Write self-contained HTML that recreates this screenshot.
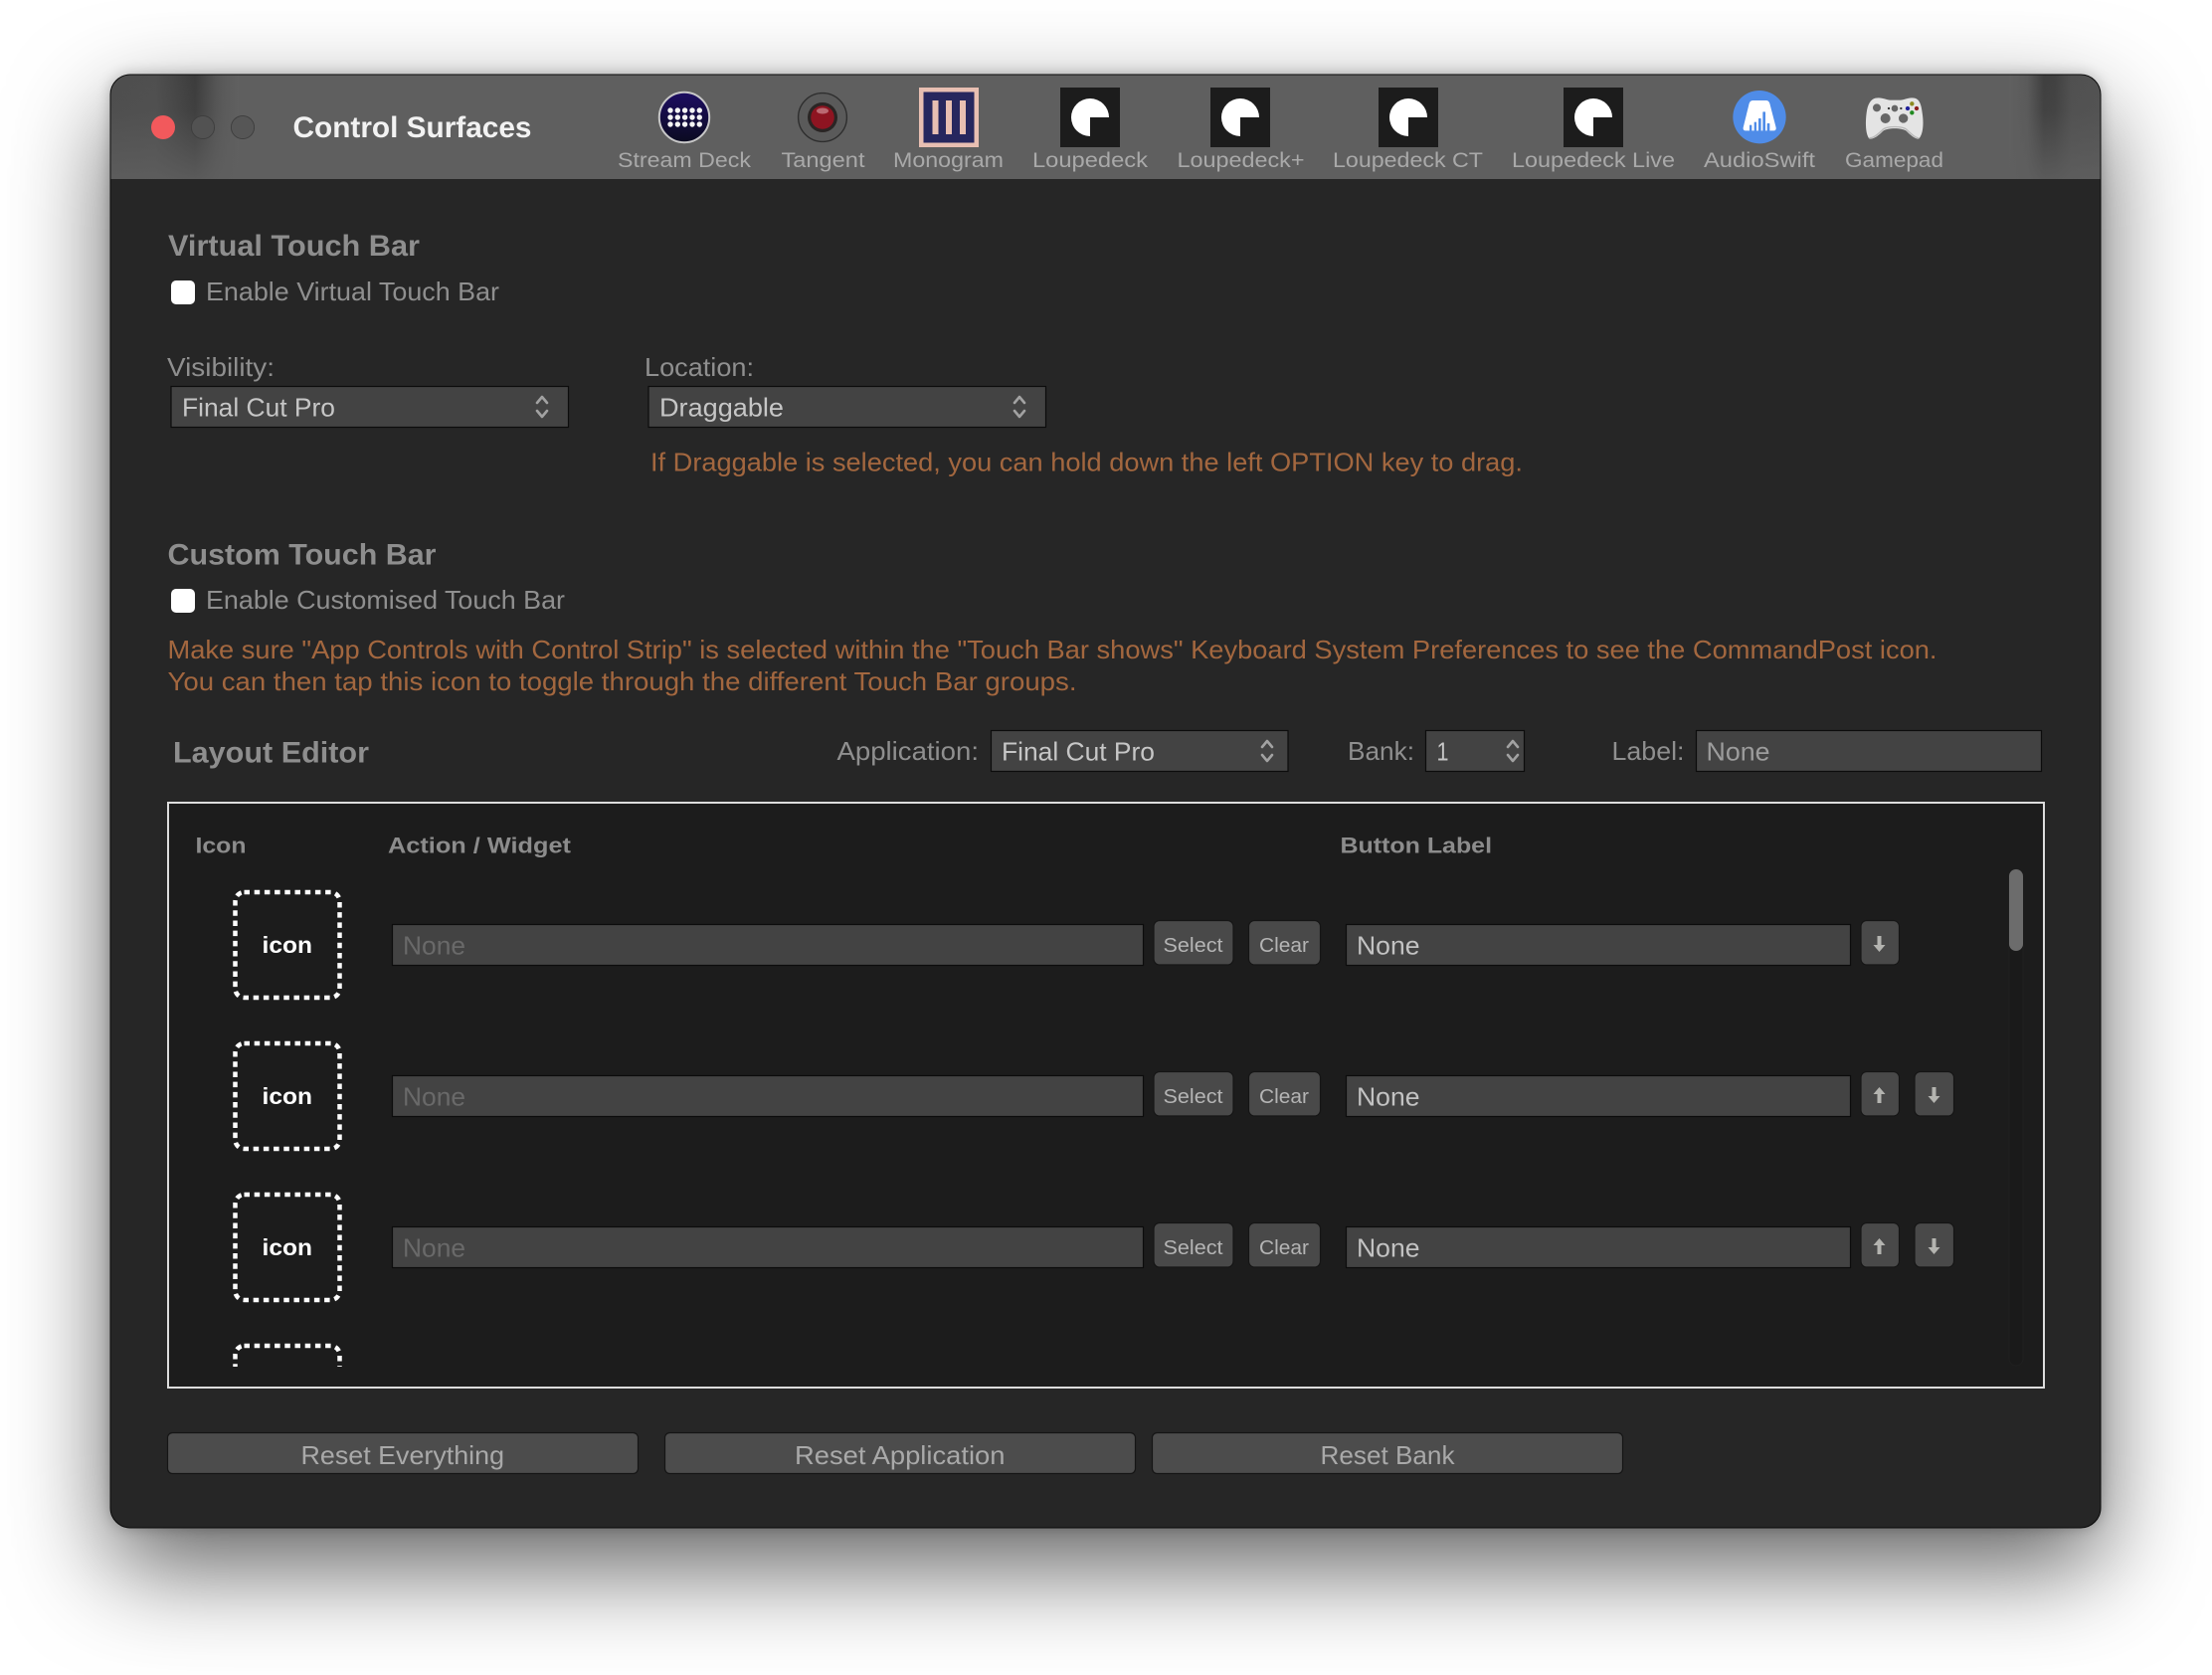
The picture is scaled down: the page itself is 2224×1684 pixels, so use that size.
<!DOCTYPE html>
<html><head><meta charset="utf-8"><title>Control Surfaces</title>
<style>
html,body{margin:0;padding:0;background:#fff;width:2224px;height:1684px;overflow:hidden}
#win{position:absolute;left:111px;top:75px;width:2001px;height:1461px;border-radius:20px;box-shadow:0 40px 100px 0 rgba(0,0,0,.62),0 0 14px rgba(0,0,0,.25)}
svg{position:absolute;left:0;top:0}
text{font-family:"Liberation Sans",sans-serif;font-size:26px}
.tb{font-size:21px;fill:#a9a9a9}
.h{font-size:29.5px;font-weight:bold;fill:#8e8e8e}
.l{fill:#8f8f8f}
.v{fill:#c6c6c6}
.o{fill:#a3673f}
.th{font-size:22.5px;font-weight:bold;fill:#8c8c8c}
.ic{font-size:23px;font-weight:bold;fill:#fff}
.ph{fill:#696969}
.b{font-size:20px;fill:#b4b4b4}
.r{fill:#a9a9a9}
.f{fill:#434343;stroke:#0c0c0c;stroke-width:1.2}
.btn{fill:#494949;stroke:#151515;stroke-width:1.2}
.dot{fill:none;stroke:#fff;stroke-width:4.5;stroke-dasharray:5.5 4.7}
.chev{fill:none;stroke:#a2a2a2;stroke-width:2.6;stroke-linecap:round;stroke-linejoin:round}
</style></head><body>
<div id="win"></div>
<svg width="2224" height="1684" viewBox="0 0 2224 1684" xmlns="http://www.w3.org/2000/svg">
<defs>
<clipPath id="wc"><rect x="111" y="75" width="2001" height="1461" rx="20"/></clipPath>
<clipPath id="tc"><rect x="170" y="808" width="1884" height="566"/></clipPath>
<linearGradient id="bl" x1="111" x2="240" y1="0" y2="0" gradientUnits="userSpaceOnUse">
<stop offset="0" stop-color="#4d4d4d"/><stop offset=".35" stop-color="#4f4f4f"/><stop offset=".55" stop-color="#434343"/><stop offset=".66" stop-color="#3c3c3c"/><stop offset=".82" stop-color="#545454"/><stop offset=".88" stop-color="#5a5a5a"/><stop offset="1" stop-color="#606060"/>
</linearGradient>
<linearGradient id="br" x1="2020" x2="2112" y1="0" y2="0" gradientUnits="userSpaceOnUse">
<stop offset="0" stop-color="#606060"/><stop offset=".2" stop-color="#5a5a5a"/><stop offset=".38" stop-color="#3f3f3f"/><stop offset=".5" stop-color="#414141"/><stop offset=".68" stop-color="#505050"/><stop offset="1" stop-color="#525252"/>
</linearGradient>
<linearGradient id="fade" x1="0" x2="0" y1="75" y2="180" gradientUnits="userSpaceOnUse">
<stop offset="0" stop-color="#5f5f5f" stop-opacity="0"/><stop offset=".35" stop-color="#5f5f5f" stop-opacity=".1"/><stop offset="1" stop-color="#5f5f5f" stop-opacity=".85"/>
</linearGradient>
<linearGradient id="sd" x1="0" x2="0" y1="0" y2="1"><stop offset="0" stop-color="#1d0d62"/><stop offset="1" stop-color="#0b0b20"/></linearGradient>
</defs>
<g clip-path="url(#wc)">
<rect x="111" y="75" width="2001" height="1461" fill="#262626"/>
<rect x="111" y="75" width="2001" height="105" fill="#5f5f5f"/>
<rect x="111" y="75" width="129" height="105" fill="url(#bl)"/>
<rect x="2020" y="75" width="92" height="105" fill="url(#br)"/>
<rect x="111" y="75" width="129" height="105" fill="url(#fade)"/>
<rect x="2020" y="75" width="92" height="105" fill="url(#fade)"/>
</g>
<rect x="111" y="75" width="2001" height="1461" rx="20" fill="none" stroke="#0a0a0a" stroke-width="1"/>

<!-- traffic lights -->
<circle cx="164" cy="128" r="12" fill="#f2595c"/>
<circle cx="204" cy="128" r="11.6" fill="#525252" stroke="#3d3d3d" stroke-width=".9"/>
<circle cx="244" cy="128" r="11.6" fill="#565656" stroke="#3d3d3d" stroke-width=".9"/>
<text x="294.5" y="138" textLength="240" lengthAdjust="spacingAndGlyphs" style="font-size:30px;font-weight:bold;fill:#f2f2f2">Control Surfaces</text>

<!-- toolbar icons -->
<circle cx="688" cy="118" r="25.2" fill="url(#sd)" stroke="#c8c8c8" stroke-width="2"/>
<g fill="#f4f4f4">
<circle cx="674" cy="111" r="2.7"/><circle cx="681.3" cy="111" r="2.7"/><circle cx="688.6" cy="111" r="2.7"/><circle cx="696" cy="111" r="2.7"/><circle cx="703.3" cy="111" r="2.7"/>
<circle cx="674" cy="118" r="2.7"/><circle cx="681.3" cy="118" r="2.7"/><circle cx="688.6" cy="118" r="2.7"/><circle cx="696" cy="118" r="2.7"/><circle cx="703.3" cy="118" r="2.7"/>
<circle cx="674" cy="125" r="2.7"/><circle cx="681.3" cy="125" r="2.7"/><circle cx="688.6" cy="125" r="2.7"/><circle cx="696" cy="125" r="2.7"/><circle cx="703.3" cy="125" r="2.7"/>
</g>
<circle cx="827" cy="118" r="24.4" fill="#5a5a5a" stroke="#2e2e2e" stroke-width="1.4"/>
<circle cx="827" cy="118" r="15" fill="#2a2524"/>
<circle cx="827" cy="118" r="11.8" fill="#8e1421"/>
<ellipse cx="827" cy="111.5" rx="6" ry="3" fill="#d9a2a8" opacity=".6"/>

<rect x="924" y="88" width="60" height="60" fill="#e8bfb2"/>
<rect x="928.5" y="92.5" width="51" height="51" fill="#27275e"/>
<rect x="937.5" y="101" width="6" height="34" fill="#e8bfb2"/><rect x="951" y="101" width="6" height="34" fill="#e8bfb2"/><rect x="965" y="101" width="6" height="34" fill="#e8bfb2"/>

<rect x="1066" y="88" width="60" height="60" fill="#1c1c1c"/>
<path d="M1096 118H1115A19 19 0 1 0 1096 137Z" fill="#fff"/>
<rect x="1217" y="88" width="60" height="60" fill="#1c1c1c"/>
<path d="M1247 118H1266A19 19 0 1 0 1247 137Z" fill="#fff"/>
<rect x="1386" y="88" width="60" height="60" fill="#1c1c1c"/>
<path d="M1416 118H1435A19 19 0 1 0 1416 137Z" fill="#fff"/>
<rect x="1572" y="88" width="60" height="60" fill="#1c1c1c"/>
<path d="M1602 118H1621A19 19 0 1 0 1602 137Z" fill="#fff"/>

<g transform="translate(1720 80) scale(.33333)">
<circle cx="147" cy="113" r="80" fill="#4f8ce8"/>
<path d="M127 63H167Q175 63 178 72L197 145Q198 154 190 154H105Q97 154 98 145L116 72Q119 63 127 63Z" fill="#fff"/>
<g fill="#4f8ce8">
<rect x="117" y="137" width="7" height="18" rx="2"/><rect x="131" y="128" width="7" height="27" rx="2"/><rect x="144" y="117" width="8" height="38" rx="2"/><rect x="157" y="97" width="8" height="58" rx="2"/><rect x="170" y="132" width="8" height="23" rx="2"/>
</g>
</g>

<g transform="translate(1720 80) scale(.33333)">
<path d="M497 56C515 52 530 62 545 62H568C585 62 598 52 615 56C630 60 635 75 638 100C643 130 641 165 628 178C620 182 605 170 590 155C575 145 535 145 520 155C505 170 490 182 478 178C467 165 466 130 470 100C473 75 482 60 497 56Z" fill="#e4e4e4"/>
<path d="M478 176C490 178 505 165 520 150C535 140 575 140 590 150C605 165 620 178 628 176" fill="none" stroke="#b8b8b8" stroke-width="4"/>
<circle cx="501" cy="85" r="12" fill="#666"/><circle cx="555" cy="87" r="10" fill="#666"/><circle cx="537" cy="87" r="3.5" fill="#333"/><circle cx="574" cy="87" r="3.5" fill="#333"/>
<circle cx="527" cy="117" r="15" fill="#666"/><circle cx="581" cy="117" r="14" fill="#666"/>
<circle cx="607" cy="73" r="6.5" fill="#8c8a20"/><circle cx="621" cy="87" r="6.5" fill="#8e2020"/><circle cx="594" cy="87" r="6.5" fill="#20209a"/><circle cx="607" cy="100" r="6.5" fill="#208a20"/>
</g>

<text class="tb" x="621" y="168" textLength="134" lengthAdjust="spacingAndGlyphs">Stream Deck</text>
<text class="tb" x="785.5" y="168" textLength="84" lengthAdjust="spacingAndGlyphs">Tangent</text>
<text class="tb" x="898" y="168" textLength="111" lengthAdjust="spacingAndGlyphs">Monogram</text>
<text class="tb" x="1038" y="168" textLength="116" lengthAdjust="spacingAndGlyphs">Loupedeck</text>
<text class="tb" x="1183.5" y="168" textLength="128" lengthAdjust="spacingAndGlyphs">Loupedeck+</text>
<text class="tb" x="1340" y="168" textLength="151" lengthAdjust="spacingAndGlyphs">Loupedeck CT</text>
<text class="tb" x="1520" y="168" textLength="164" lengthAdjust="spacingAndGlyphs">Loupedeck Live</text>
<text class="tb" x="1713" y="168" textLength="112" lengthAdjust="spacingAndGlyphs">AudioSwift</text>
<text class="tb" x="1855" y="168" textLength="99" lengthAdjust="spacingAndGlyphs">Gamepad</text>

<!-- Virtual Touch Bar -->
<text class="h" x="169" y="257" textLength="253" lengthAdjust="spacingAndGlyphs">Virtual Touch Bar</text>
<rect x="172" y="282" width="24" height="24" rx="5" fill="#fff"/>
<text class="l" x="207" y="302" textLength="295" lengthAdjust="spacingAndGlyphs">Enable Virtual Touch Bar</text>
<text class="l" x="168" y="378" textLength="108" lengthAdjust="spacingAndGlyphs">Visibility:</text>
<text class="l" x="648" y="378" textLength="110" lengthAdjust="spacingAndGlyphs">Location:</text>
<rect class="f" x="172" y="388.5" width="399.5" height="41"/>
<text class="v" x="183" y="418.5" textLength="154" lengthAdjust="spacingAndGlyphs">Final Cut Pro</text>
<path class="chev" d="M540 405L545 399L550 405M540 413L545 419L550 413"/>
<rect class="f" x="652" y="388.5" width="399.5" height="41"/>
<text class="v" x="663" y="418.5" textLength="125" lengthAdjust="spacingAndGlyphs">Draggable</text>
<path class="chev" d="M1020 405L1025 399L1030 405M1020 413L1025 419L1030 413"/>
<text class="o" x="654" y="473.5" textLength="877" lengthAdjust="spacingAndGlyphs">If Draggable is selected, you can hold down the left OPTION key to drag.</text>

<!-- Custom Touch Bar -->
<text class="h" x="168.5" y="567.5" textLength="270" lengthAdjust="spacingAndGlyphs">Custom Touch Bar</text>
<rect x="172" y="592" width="24" height="24" rx="5" fill="#fff"/>
<text class="l" x="207" y="612" textLength="361" lengthAdjust="spacingAndGlyphs">Enable Customised Touch Bar</text>
<text class="o" x="168.5" y="662" textLength="1779" lengthAdjust="spacingAndGlyphs">Make sure "App Controls with Control Strip" is selected within the "Touch Bar shows" Keyboard System Preferences to see the CommandPost icon.</text>
<text class="o" x="168.5" y="694" textLength="914" lengthAdjust="spacingAndGlyphs">You can then tap this icon to toggle through the different Touch Bar groups.</text>

<!-- Layout Editor header -->
<text class="h" x="174" y="766.5" textLength="197" lengthAdjust="spacingAndGlyphs">Layout Editor</text>
<text class="l" x="841.5" y="764" textLength="142.5" lengthAdjust="spacingAndGlyphs">Application:</text>
<rect class="f" x="996.5" y="734.5" width="298.5" height="41"/>
<text class="v" x="1007" y="764.5" textLength="154" lengthAdjust="spacingAndGlyphs">Final Cut Pro</text>
<path class="chev" d="M1269 751L1274 745L1279 751M1269 759L1274 765L1279 759"/>
<text class="l" x="1355" y="764" textLength="67" lengthAdjust="spacingAndGlyphs">Bank:</text>
<rect class="f" x="1433.5" y="734.5" width="99" height="41"/>
<text class="v" x="1444.5" y="764.5" textLength="12" lengthAdjust="spacingAndGlyphs">1</text>
<path class="chev" d="M1516 751L1521 745L1526 751M1516 759L1521 765L1526 759"/>
<text class="l" x="1620.5" y="764" textLength="73" lengthAdjust="spacingAndGlyphs">Label:</text>
<rect class="f" x="1705.5" y="734.5" width="347" height="41"/>
<text x="1715.5" y="764.5" textLength="64" lengthAdjust="spacingAndGlyphs" fill="#9c9c9c">None</text>

<!-- Table -->
<rect x="169" y="807" width="1886" height="588" fill="#1c1c1c" stroke="#dcdcdc" stroke-width="2"/>
<text class="th" x="196.5" y="857.5" textLength="51" lengthAdjust="spacingAndGlyphs">Icon</text>
<text class="th" x="390" y="857.5" textLength="184" lengthAdjust="spacingAndGlyphs">Action / Widget</text>
<text class="th" x="1347.5" y="857.5" textLength="152.5" lengthAdjust="spacingAndGlyphs">Button Label</text>

<rect x="2020" y="874" width="14" height="499" rx="7" fill="#1a1a1a" stroke="#202020"/>
<rect x="2020" y="874" width="14" height="82" rx="7" fill="#6c6c6c"/>

<!-- Row 1 -->
<rect class="dot" x="236.5" y="897" width="105" height="106" rx="9"/>
<text class="ic" x="263.5" y="958" textLength="50.5" lengthAdjust="spacingAndGlyphs">icon</text>
<rect class="f" x="394.5" y="929.5" width="755" height="41"/>
<text class="ph" x="405" y="959.5" textLength="63" lengthAdjust="spacingAndGlyphs">None</text>
<rect class="btn" x="1160" y="925.5" width="80" height="44.5" rx="6"/>
<text class="b" x="1169.5" y="957" textLength="60" lengthAdjust="spacingAndGlyphs">Select</text>
<rect class="btn" x="1255.5" y="925.5" width="72" height="44.5" rx="6"/>
<text class="b" x="1266" y="957" textLength="50" lengthAdjust="spacingAndGlyphs">Clear</text>
<rect class="f" x="1353.5" y="929.5" width="507" height="41"/>
<text x="1364" y="959.5" textLength="63.5" lengthAdjust="spacingAndGlyphs" fill="#c2c2c2">None</text>
<rect class="btn" x="1871" y="925.5" width="38.5" height="44.5" rx="6"/>
<path d="M1887.5 941H1891.5V950H1895.5L1889.5 957L1883.5 950H1887.5Z" fill="#b4b4b0"/>

<!-- Row 2 -->
<rect class="dot" x="236.5" y="1049" width="105" height="106" rx="9"/>
<text class="ic" x="263.5" y="1110" textLength="50.5" lengthAdjust="spacingAndGlyphs">icon</text>
<rect class="f" x="394.5" y="1081.5" width="755" height="41"/>
<text class="ph" x="405" y="1111.5" textLength="63" lengthAdjust="spacingAndGlyphs">None</text>
<rect class="btn" x="1160" y="1077.5" width="80" height="44.5" rx="6"/>
<text class="b" x="1169.5" y="1109" textLength="60" lengthAdjust="spacingAndGlyphs">Select</text>
<rect class="btn" x="1255.5" y="1077.5" width="72" height="44.5" rx="6"/>
<text class="b" x="1266" y="1109" textLength="50" lengthAdjust="spacingAndGlyphs">Clear</text>
<rect class="f" x="1353.5" y="1081.5" width="507" height="41"/>
<text x="1364" y="1111.5" textLength="63.5" lengthAdjust="spacingAndGlyphs" fill="#c2c2c2">None</text>
<rect class="btn" x="1871" y="1077.5" width="38.5" height="44.5" rx="6"/>
<path d="M1887.5 1109H1891.5V1100H1895.5L1889.5 1093L1883.5 1100H1887.5Z" fill="#b4b4b0"/>
<rect class="btn" x="1925" y="1077.5" width="39.5" height="44.5" rx="6"/>
<path d="M1942.5 1093H1946.5V1102H1950.5L1944.5 1109L1938.5 1102H1942.5Z" fill="#b4b4b0"/>

<!-- Row 3 -->
<rect class="dot" x="236.5" y="1201" width="105" height="106" rx="9"/>
<text class="ic" x="263.5" y="1262" textLength="50.5" lengthAdjust="spacingAndGlyphs">icon</text>
<rect class="f" x="394.5" y="1233.5" width="755" height="41"/>
<text class="ph" x="405" y="1263.5" textLength="63" lengthAdjust="spacingAndGlyphs">None</text>
<rect class="btn" x="1160" y="1229.5" width="80" height="44.5" rx="6"/>
<text class="b" x="1169.5" y="1261" textLength="60" lengthAdjust="spacingAndGlyphs">Select</text>
<rect class="btn" x="1255.5" y="1229.5" width="72" height="44.5" rx="6"/>
<text class="b" x="1266" y="1261" textLength="50" lengthAdjust="spacingAndGlyphs">Clear</text>
<rect class="f" x="1353.5" y="1233.5" width="507" height="41"/>
<text x="1364" y="1263.5" textLength="63.5" lengthAdjust="spacingAndGlyphs" fill="#c2c2c2">None</text>
<rect class="btn" x="1871" y="1229.5" width="38.5" height="44.5" rx="6"/>
<path d="M1887.5 1261H1891.5V1252H1895.5L1889.5 1245L1883.5 1252H1887.5Z" fill="#b4b4b0"/>
<rect class="btn" x="1925" y="1229.5" width="39.5" height="44.5" rx="6"/>
<path d="M1942.5 1245H1946.5V1254H1950.5L1944.5 1261L1938.5 1254H1942.5Z" fill="#b4b4b0"/>

<!-- Row 4 clipped -->
<g clip-path="url(#tc)"><rect class="dot" x="236.5" y="1353" width="105" height="106" rx="9"/></g>

<!-- Bottom buttons -->
<rect class="btn" x="168.5" y="1440.5" width="473" height="41" rx="5" style="fill:#4c4c4c"/>
<text class="r" x="302.5" y="1472" textLength="204.5" lengthAdjust="spacingAndGlyphs">Reset Everything</text>
<rect class="btn" x="668.5" y="1440.5" width="473" height="41" rx="5" style="fill:#4c4c4c"/>
<text class="r" x="799" y="1472" textLength="211.5" lengthAdjust="spacingAndGlyphs">Reset Application</text>
<rect class="btn" x="1158.5" y="1440.5" width="473" height="41" rx="5" style="fill:#4c4c4c"/>
<text class="r" x="1327.5" y="1472" textLength="135" lengthAdjust="spacingAndGlyphs">Reset Bank</text>
</svg>
</body></html>
